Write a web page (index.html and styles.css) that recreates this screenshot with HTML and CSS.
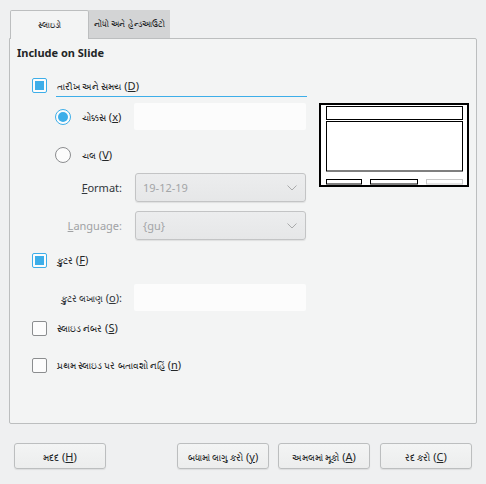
FILE: index.html
```html
<!DOCTYPE html>
<html>
<head>
<meta charset="utf-8">
<link rel="stylesheet" href="styles.css">
</head>
<body>
<div class="dialog">
  <div class="tabs">
    <div class="tab active">સ્લાઇડો</div>
    <div class="tab">નોંધો અને હેન્ડઆઉટો</div>
  </div>
  <div class="panel">
    <div class="heading">Include on Slide</div>
    <div class="main">
      <div class="left">
        <div class="row check-row first-row">
          <span class="checkbox checked"></span>
          <span class="clabel focus"><span class="g">તારીખ અને સમય</span> (<u>D</u>)</span>
        </div>
        <div class="row radio-row fixed-row">
          <span class="radio checked"></span>
          <span class="rlabel"><span class="g">ચોક્કસ</span> (<u>x</u>)</span>
          <span class="textbox"></span>
        </div>
        <div class="row radio-row var-row">
          <span class="radio"></span>
          <span class="rlabel"><span class="g">ચલ</span> (<u>V</u>)</span>
        </div>
        <div class="row combo-row format-row">
          <span class="flabel"><u>F</u>ormat:</span>
          <span class="combo">19-12-19<svg class="chev" width="10" height="6" viewBox="0 0 10 6"><path d="M0.5 0.5 L5 5 L9.5 0.5" fill="none" stroke="#a9aaab" stroke-width="1"/></svg></span>
        </div>
        <div class="row combo-row lang-row">
          <span class="flabel disabled"><u>L</u>anguage:</span>
          <span class="combo">{gu}<svg class="chev" width="10" height="6" viewBox="0 0 10 6"><path d="M0.5 0.5 L5 5 L9.5 0.5" fill="none" stroke="#a9aaab" stroke-width="1"/></svg></span>
        </div>
        <div class="row check-row footer-row">
          <span class="checkbox checked"></span>
          <span class="clabel"><span class="g">ફુટર</span> (<u>F</u>)</span>
        </div>
        <div class="row text-row">
          <span class="flabel"><span class="g">ફુટર લખાણ</span> (<u>o</u>):</span>
          <span class="textbox"></span>
        </div>
        <div class="row check-row num-row">
          <span class="checkbox"></span>
          <span class="clabel"><span class="g">સ્લાઇડ નંબર</span> (<u>S</u>)</span>
        </div>
        <div class="row check-row firstslide-row">
          <span class="checkbox"></span>
          <span class="clabel"><span class="g">પ્રથમ સ્લાઇડ પર બતાવશો નહિં</span> (<u>n</u>)</span>
        </div>
      </div>
      <div class="preview">
        <svg width="150" height="84" viewBox="0 0 150 84">
          <rect x="1" y="1" width="148" height="82" fill="#fff" stroke="#000" stroke-width="2"/>
          <rect x="7.5" y="3.5" width="136" height="13" fill="none" stroke="#000" stroke-width="1"/>
          <rect x="7.5" y="18.5" width="136" height="49.5" fill="none" stroke="#000" stroke-width="1"/>
          <rect x="7.5" y="76.5" width="35" height="4.5" fill="none" stroke="#000" stroke-width="1"/>
          <rect x="51.5" y="76.5" width="47" height="4.5" fill="none" stroke="#000" stroke-width="1"/>
          <rect x="107.5" y="76.5" width="36" height="4.5" fill="none" stroke="#c8c8c8" stroke-width="1"/>
        </svg>
      </div>
    </div>
  </div>
  <div class="buttons">
    <button class="btn"><span class="g">મદદ</span> (<u>H</u>)</button>
    <span class="spacer"></span>
    <button class="btn"><span class="g">બધામાં લાગુ કરો</span> (<u>y</u>)</button>
    <button class="btn"><span class="g">અમલમાં મૂકો</span> (<u>A</u>)</button>
    <button class="btn"><span class="g">રદ કરો</span> (<u>C</u>)</button>
  </div>
</div>
</body>
</html>
```

FILE: styles.css
```css
html, body {
  margin: 0;
  padding: 0;
  background: #eff0f1;
  width: 486px;
  height: 484px;
  overflow: hidden;
  font-family: "Noto Sans", "DejaVu Sans", sans-serif;
  color: #232627;
}

.g {
  font-size: 8.5px;
}

.dialog {
  padding: 10px 9px 0 9px;
}

.tabs {
  display: flex;
  margin-left: 1px;
  height: 28px;
}

.tab {
  box-sizing: border-box;
  height: 28px;
  font-size: 8px;
  display: flex;
  align-items: center;
  justify-content: center;
  color: #232627;
  white-space: nowrap;
}

.tab.active {
  width: 79px;
  height: 29px;
  margin-bottom: -1px;
  background: #f3f4f4;
  border: 1px solid #bcbebf;
  border-bottom: none;
  border-radius: 2px 2px 0 0;
  position: relative;
  z-index: 1;
  padding-bottom: 1px;
}

.tab:not(.active) {
  width: 81px;
  background: #d3d4d5;
}

.panel {
  box-sizing: border-box;
  height: 386px;
  background: #f3f4f4;
  border: 1px solid #bcbebf;
  border-radius: 0 2px 2px 2px;
}

.heading {
  margin: 6px 0 0 7px;
  font-size: 11px;
  font-weight: bold;
  line-height: 16px;
}

.main {
  display: flex;
  margin-top: 15px;
}

.left {
  width: 297px;
  display: flex;
  flex-direction: column;
}

.row {
  display: flex;
  align-items: center;
}

.check-row { height: 20px; }
.first-row { height: 21px; align-items: flex-start; }
.first-row .checkbox { margin-top: 2px; }
.radio-row { height: 27px; }
.combo-row { height: 29px; }
.text-row { height: 27px; }

.fixed-row { margin-top: 6px; }
.var-row { margin-top: 11px; }
.format-row { margin-top: 5px; }
.lang-row { margin-top: 9px; }
.footer-row { margin-top: 10px; }
.text-row { margin-top: 14px; }
.num-row { margin-top: 7px; }
.firstslide-row { margin-top: 17px; }

.checkbox {
  box-sizing: border-box;
  width: 15px;
  height: 15px;
  margin-left: 22px;
  border: 1px solid #8b8d8f;
  border-radius: 2px;
  background: #fcfcfc;
  display: flex;
  align-items: center;
  justify-content: center;
  flex: none;
}

.checkbox.checked {
  border-color: #3daee9;
}

.checkbox.checked::after {
  content: "";
  width: 9px;
  height: 9px;
  background: #3daee9;
}

.clabel {
  margin-left: 10px;
  font-size: 11px;
  line-height: 19px;
  white-space: nowrap;
}

.clabel.focus {
  box-sizing: border-box;
  height: 21px;
  line-height: 20px;
  margin-left: 9px;
  padding-left: 1px;
  flex: 1;
  border-bottom: 1px solid #3daee9;
}

.radio {
  box-sizing: border-box;
  width: 16px;
  height: 16px;
  margin-left: 45px;
  border: 1px solid #8b8d8f;
  border-radius: 50%;
  background: #fcfcfc;
  display: flex;
  align-items: center;
  justify-content: center;
  flex: none;
}

.radio.checked {
  border-color: #3daee9;
}

.radio.checked::after {
  content: "";
  width: 10px;
  height: 10px;
  border-radius: 50%;
  background: #3daee9;
}

.rlabel {
  margin-left: 11px;
  width: 52px;
  font-size: 11px;
  white-space: nowrap;
}

.textbox {
  width: 172px;
  height: 27px;
  background: #fcfcfc;
  border-radius: 2px;
}

.text-row .textbox {
  margin-left: 12px;
}

.flabel {
  width: 112px;
  text-align: right;
  font-size: 11px;
  color: #31363b;
  flex: none;
  white-space: nowrap;
}

.flabel.disabled {
  color: #a0a2a4;
}

.combo {
  box-sizing: border-box;
  margin-left: 13px;
  width: 171px;
  height: 29px;
  border: 1px solid #c3c4c5;
  border-radius: 3px;
  background: linear-gradient(#ecedee, #e6e7e8);
  box-shadow: 0 1px 1px rgba(0,0,0,0.08);
  display: flex;
  align-items: center;
  justify-content: space-between;
  padding: 0 8px 0 7px;
  font-size: 11px;
  color: #a3a5a7;
}

.chev {
  display: block;
}

.preview {
  margin-left: 12px;
  margin-top: 27px;
}

.preview svg {
  display: block;
}

.buttons {
  display: flex;
  margin-top: 19px;
  padding-left: 5px;
  padding-right: 5px;
}

.spacer {
  flex: 1;
}

.btn {
  box-sizing: border-box;
  width: 92px;
  height: 26px;
  border: 1px solid #bcbebf;
  border-radius: 3px;
  background: linear-gradient(#f3f4f4, #eceded);
  box-shadow: 0 1px 1px rgba(0,0,0,0.08);
  font-family: "Noto Sans", "DejaVu Sans", sans-serif;
  font-size: 11px;
  color: #232627;
  padding: 0;
  white-space: nowrap;
}

.btn + .btn {
  margin-left: 9px;
}

.btn:last-child {
  margin-left: 10px;
}
```
